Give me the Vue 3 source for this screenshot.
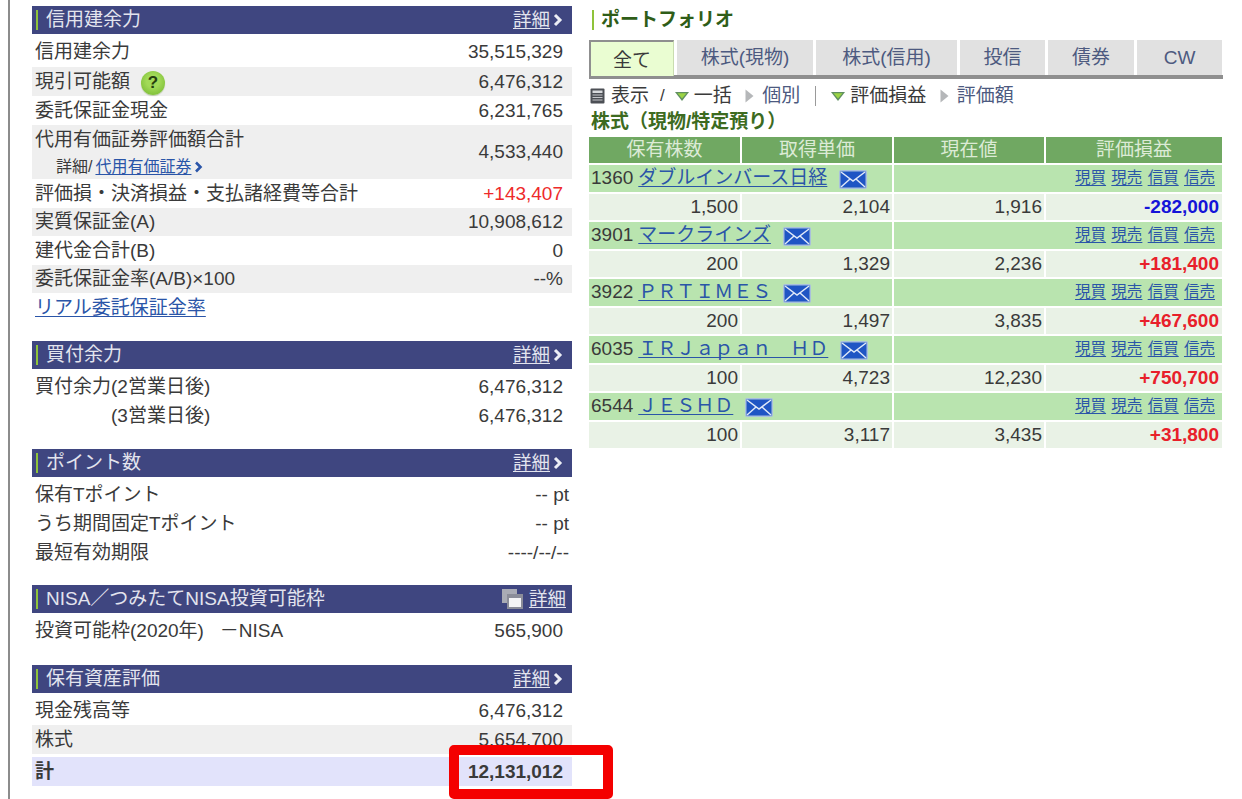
<script setup>
const marginRows = [
  { label: '信用建余力', value: '35,515,329', size: 'long' },
  { label: '現引可能額', value: '6,476,312', help: true, alt: true },
  { label: '委託保証金現金', value: '6,231,765' },
  { label: '代用有価証券評価額合計', value: '4,533,440', alt: true, sub: true },
  { label: '評価損・決済損益・支払諸経費等合計', value: '+143,407', red: true },
  { label: '実質保証金(A)', value: '10,908,612', alt: true, size: 'short' },
  { label: '建代金合計(B)', value: '0' },
  { label: '委託保証金率(A/B)×100', value: '--%', alt: true, size: 'short' },
]

const tabs = [
  { name: '全て', width: 85, active: true },
  { name: '株式(現物)', width: 136 },
  { name: '株式(信用)', width: 141 },
  { name: '投信', width: 85 },
  { name: '債券', width: 86 },
  { name: 'CW', width: 85 },
]

const stocks = [
  { code: '1360', name: 'ダブルインバース日経', qty: '1,500', cost: '2,104', price: '1,916', pl: '-282,000' },
  { code: '3901', name: 'マークラインズ', qty: '200', cost: '1,329', price: '2,236', pl: '+181,400' },
  { code: '3922', name: 'ＰＲＴＩＭＥＳ', qty: '200', cost: '1,497', price: '3,835', pl: '+467,600' },
  { code: '6035', name: 'ＩＲＪａｐａｎ　ＨＤ', qty: '100', cost: '4,723', price: '12,230', pl: '+750,700' },
  { code: '6544', name: 'ＪＥＳＨＤ', qty: '100', cost: '3,117', price: '3,435', pl: '+31,800' },
]
</script>

<template>
  <div class="page">
    <div class="left">
      <section class="block">
        <div class="head">
          <span class="head-title">信用建余力</span>
          <a class="head-link">詳細<svg class="chev" width="10" height="14" viewBox="0 0 10 14"><path d="M2 2l5 5-5 5" fill="none" stroke="currentColor" stroke-width="3" /></svg></a>
        </div>
        <div
          v-for="row in marginRows"
          :key="row.label"
          class="row"
          :class="[row.size ? `row--${row.size}` : '', { 'row--alt': row.alt, 'row--tall': row.sub }]"
        >
          <div class="label" :class="{ 'label--stack': row.sub }">
            <div class="label-line">
              {{ row.label }}
              <span v-if="row.help" class="help">?</span>
            </div>
            <div v-if="row.sub" class="sub">
              <span>詳細/</span><a class="link">代用有価証券</a><svg width="9" height="12" viewBox="0 0 9 12"><path d="M2 1.5l4.5 4.5L2 10.5" fill="none" stroke="#2a55a8" stroke-width="2.6" /></svg>
            </div>
          </div>
          <div class="value" :class="{ 'value--red': row.red }">{{ row.value }}</div>
        </div>
        <div class="row row--long"><a class="link">リアル委託保証金率</a></div>
      </section>

      <section class="block block--m19">
        <div class="head">
          <span class="head-title">買付余力</span>
          <a class="head-link">詳細<svg class="chev" width="10" height="14" viewBox="0 0 10 14"><path d="M2 2l5 5-5 5" fill="none" stroke="currentColor" stroke-width="3" /></svg></a>
        </div>
        <div class="row"><div class="label">買付余力(2営業日後)</div><div class="value">6,476,312</div></div>
        <div class="row"><div class="label label--indent">(3営業日後)</div><div class="value">6,476,312</div></div>
      </section>

      <section class="block">
        <div class="head">
          <span class="head-title">ポイント数</span>
          <a class="head-link">詳細<svg class="chev" width="10" height="14" viewBox="0 0 10 14"><path d="M2 2l5 5-5 5" fill="none" stroke="currentColor" stroke-width="3" /></svg></a>
        </div>
        <div class="row"><div class="label">保有Tポイント</div><div class="value value--wide">-- pt</div></div>
        <div class="row"><div class="label">うち期間固定Tポイント</div><div class="value value--wide">-- pt</div></div>
        <div class="row"><div class="label">最短有効期限</div><div class="value value--wide">----/--/--</div></div>
      </section>

      <section class="block block--m20">
        <div class="head head--plain">
          <span class="head-title">NISA／つみたてNISA投資可能枠</span>
          <a class="head-link">
            <svg class="copy" width="23" height="22" viewBox="0 0 23 22">
              <rect x="1" y="1" width="15" height="14" fill="#a9abb5" />
              <rect x="6" y="6" width="16" height="15" fill="#8b8d99" />
              <rect x="8" y="10" width="12" height="9" fill="#f4f4f6" />
            </svg>詳細
          </a>
        </div>
        <div class="row"><div class="label">投資可能枠(2020年)&nbsp;&nbsp; －NISA</div><div class="value">565,900</div></div>
      </section>

      <section class="block">
        <div class="head">
          <span class="head-title">保有資産評価</span>
          <a class="head-link">詳細<svg class="chev" width="10" height="14" viewBox="0 0 10 14"><path d="M2 2l5 5-5 5" fill="none" stroke="currentColor" stroke-width="3" /></svg></a>
        </div>
        <div class="row"><div class="label">現金残高等</div><div class="value">6,476,312</div></div>
        <div class="row row--alt"><div class="label">株式</div><div class="value">5,654,700</div></div>
        <div class="row row--total"><div class="label">計</div><div class="value">12,131,012</div></div>
      </section>
    </div>

    <div class="right">
      <h2 class="title">ポートフォリオ</h2>
      <div class="tabs">
        <div
          v-for="tab in tabs"
          :key="tab.name"
          class="tab"
          :class="{ 'tab--active': tab.active }"
          :style="{ width: tab.width + 'px' }"
        >{{ tab.name }}</div>
      </div>

      <div class="tools">
        <svg class="calc" width="15" height="16" viewBox="0 0 15 16">
          <rect x="0.5" y="0.5" width="14" height="15" rx="1" fill="#4c4f55" />
          <rect x="2.5" y="2.5" width="10" height="2.5" fill="#d8dadd" />
          <path d="M2.5 7h10M2.5 9.5h10M2.5 12h10" stroke="#c4c6ca" stroke-width="1.2" />
        </svg>
        <span class="t-show">表示</span>
        <span class="t-slash">/</span>
        <svg class="tri-down" width="14" height="9" viewBox="0 0 14 9"><path d="M0 0h14L7 9z" fill="#5f8f60" /><path d="M2.5 1.2h9L7 6.5z" fill="#9bd444" /></svg>
        <span>一括</span>
        <svg class="tri-right" width="9" height="14" viewBox="0 0 9 14"><path d="M0.5 0.5L8.5 7l-8 6.5z" fill="#b5b7b9" /></svg>
        <a class="t-link">個別</a>
        <span class="t-sep"></span>
        <svg class="tri-down" width="14" height="9" viewBox="0 0 14 9"><path d="M0 0h14L7 9z" fill="#5f8f60" /><path d="M2.5 1.2h9L7 6.5z" fill="#9bd444" /></svg>
        <span>評価損益</span>
        <svg class="tri-right" width="9" height="14" viewBox="0 0 9 14"><path d="M0.5 0.5L8.5 7l-8 6.5z" fill="#b5b7b9" /></svg>
        <a class="t-link">評価額</a>
      </div>

      <h3 class="subtitle">株式（現物/特定預り）</h3>

      <table class="stocks">
        <colgroup>
          <col class="c1" /><col class="c2" /><col class="c3" /><col class="c4" />
        </colgroup>
        <thead>
          <tr><th>保有株数</th><th>取得単価</th><th>現在値</th><th>評価損益</th></tr>
        </thead>
        <tbody>
          <template v-for="stock in stocks" :key="stock.code">
            <tr class="name-row">
              <td colspan="2">
                <div class="name-cell">
                  <span class="code">{{ stock.code }}</span><a class="link">{{ stock.name }}</a>
                  <svg class="mail" width="28" height="21" viewBox="0 0 28 21">
                    <rect x="0" y="1" width="28" height="19" rx="2" fill="#a9c0dd" />
                    <rect x="1.5" y="2.5" width="25" height="16" fill="#1f55c4" />
                    <path d="M2 3l12 9 12-9M2 18l9-8M26 18l-9-8" fill="none" stroke="#dfe8f8" stroke-width="1.5" />
                  </svg>
                </div>
              </td>
              <td colspan="2" class="trade">
                <a>現買</a><a>現売</a><a>信買</a><a>信売</a>
              </td>
            </tr>
            <tr class="value-row">
              <td>{{ stock.qty }}</td>
              <td>{{ stock.cost }}</td>
              <td>{{ stock.price }}</td>
              <td class="pl" :class="stock.pl.startsWith('-') ? 'pl--down' : 'pl--up'">{{ stock.pl }}</td>
            </tr>
          </template>
        </tbody>
      </table>
    </div>

    <div class="highlight"></div>
  </div>
</template>

<style scoped>
.page {
  position: relative;
  display: flex;
  gap: 17px;
  box-sizing: border-box;
  width: 1242px;
  height: 799px;
  padding: 6px 0 0 32px;
  overflow: hidden;
  background: #fff;
  color: #3a3a3a;
  font-family: "Liberation Sans", "Noto Sans CJK JP", sans-serif;
  font-size: 19px;
  line-height: 22px;
}

.page::before {
  content: "";
  position: absolute;
  left: 8px;
  top: 0;
  bottom: 0;
  width: 2px;
  background: #8c8c8c;
}

.left {
  flex: none;
  width: 540px;
}

.block {
  margin-bottom: 18px;
}

.block--m19 {
  margin-bottom: 19px;
}

.block--m20 {
  margin-bottom: 20px;
}

.head {
  display: flex;
  align-items: center;
  justify-content: space-between;
  height: 28px;
  margin-bottom: 3px;
  padding: 0 9px 0 4px;
  background: #3f4680;
  color: #e3e4ee;
}

.head--plain {
  padding-right: 6px;
}

.head-title {
  padding-left: 8px;
  border-left: 2px solid #8fc33a;
  line-height: 20px;
}

.head-link {
  display: flex;
  align-items: center;
  font-size: 18.5px;
  text-decoration: underline;
  text-underline-offset: 2px;
}

.chev {
  margin-left: 3px;
  color: #eceef5;
}

.copy {
  margin-right: 5px;
}

.row {
  display: flex;
  align-items: center;
  justify-content: space-between;
  box-sizing: border-box;
  height: 29px;
  padding: 0 9px 0 3px;
  white-space: nowrap;
}

.row--long {
  height: 30px;
}

.row--short {
  height: 28px;
}

.row--alt {
  background: #efefef;
}

.row--tall {
  height: 54px;
}

.row--total {
  margin-top: 3px;
  background: #e2e3fb;
  font-weight: 700;
}

.label-line {
  display: flex;
  align-items: center;
  height: 22px;
}

.label--indent {
  padding-left: 76px;
}

.label--stack {
  padding-top: 2px;
}

.value--red {
  color: #ee2a2a;
}

.value--wide {
  margin-right: -6px;
}

.help {
  flex: none;
  width: 24px;
  height: 24px;
  margin: 1px 0 -1px 11px;
  border-radius: 50%;
  background: radial-gradient(circle at 50% 42%, #a2da58 35%, #6fb32a);
  box-shadow: 0 1px 1px #b9c7a8;
  color: #27400f;
  font-size: 17px;
  font-weight: 700;
  line-height: 24px;
  text-align: center;
}

.sub {
  display: flex;
  align-items: center;
  margin: 5px 0 0 21px;
  font-size: 16px;
}

.sub .link {
  margin-left: 3px;
}

.sub svg {
  margin-left: 3px;
}

.link {
  color: #2a55a8;
  text-decoration: underline;
  text-underline-offset: 2px;
}

.right {
  flex: none;
  width: 634px;
}

.title {
  margin: 4px 0 0 3px;
  padding-left: 7px;
  border-left: 2px solid #8fc33a;
  color: #2f5d18;
  font-size: 19px;
  font-weight: 700;
  line-height: 20px;
}

.tabs {
  display: flex;
  gap: 3px;
  height: 35px;
  margin-top: 10px;
  border-bottom: 4px solid #8f8f8f;
}

.tab {
  display: flex;
  align-items: center;
  justify-content: center;
  box-sizing: border-box;
  flex: none;
  background: #e1e1e1;
  color: #4d5a80;
}

.tab--active {
  margin-bottom: -1px;
  padding-top: 3px;
  border-top: 2px solid #8f8f8f;
  border-left: 2px solid #8f8f8f;
  border-right: 1px solid #c9dcb0;
  background: #eafdd2;
  color: #3a3a3a;
}

.tools {
  display: flex;
  align-items: center;
  height: 24px;
  margin-top: 5px;
}

.calc {
  margin: 0 6px 0 1px;
}

.t-slash {
  margin: 0 10px 0 11px;
  font-size: 17px;
}

.tri-down {
  margin-right: 5px;
}

.tri-right {
  margin: 0 8px 0 13.5px;
}

.t-link {
  color: #4d5a80;
}

.t-sep {
  width: 1px;
  height: 20px;
  margin: 0 15px;
  background: #9a9a9a;
}

.subtitle {
  margin: 3px 0 5px 2px;
  color: #3d6b1f;
  font-size: 19px;
  font-weight: 700;
  line-height: 21px;
}

.stocks {
  width: 633px;
  border-collapse: separate;
  border-spacing: 0;
  table-layout: fixed;
}

.c1 { width: 153px; }
.c2 { width: 152px; }
.c3 { width: 152px; }
.c4 { width: 176px; }

.stocks th {
  height: 26px;
  padding: 0;
  border-right: 2px solid #fff;
  border-bottom: 2px solid #fff;
  background: #70a862;
  color: #dcebd6;
  font-weight: 400;
}

.stocks th:last-child,
.stocks td:last-child {
  border-right: 0;
}

.stocks td {
  box-sizing: border-box;
  height: 28.5px;
  padding: 0 2px;
  border-bottom: 2px solid #fff;
  border-right: 2px solid #fff;
  text-align: right;
  white-space: nowrap;
}

.name-row td {
  background: #b9e4af;
  text-align: left;
}

.name-cell {
  display: flex;
  align-items: center;
}

.code {
  margin-right: 5px;
}

.mail {
  margin: 3px 0 0 12px;
}

.stocks .trade {
  padding-right: 7px;
  font-size: 15.5px;
  text-align: right;
}

.trade a {
  margin-left: 5.3px;
  color: #2a55a8;
  text-decoration: underline;
  text-underline-offset: 2px;
}

.value-row td {
  background: #e9f2e6;
}

.stocks .pl {
  padding-right: 3px;
  font-weight: 700;
}

.pl--down {
  color: #1414d8;
}

.pl--up {
  color: #e8202a;
}

.highlight {
  position: absolute;
  left: 449px;
  top: 745px;
  box-sizing: border-box;
  width: 164px;
  height: 54px;
  border: 10px solid #f40000;
  border-radius: 5px;
}
</style>

<style>
html,
body {
  margin: 0;
  overflow: hidden;
  background: #fff;
}
</style>
